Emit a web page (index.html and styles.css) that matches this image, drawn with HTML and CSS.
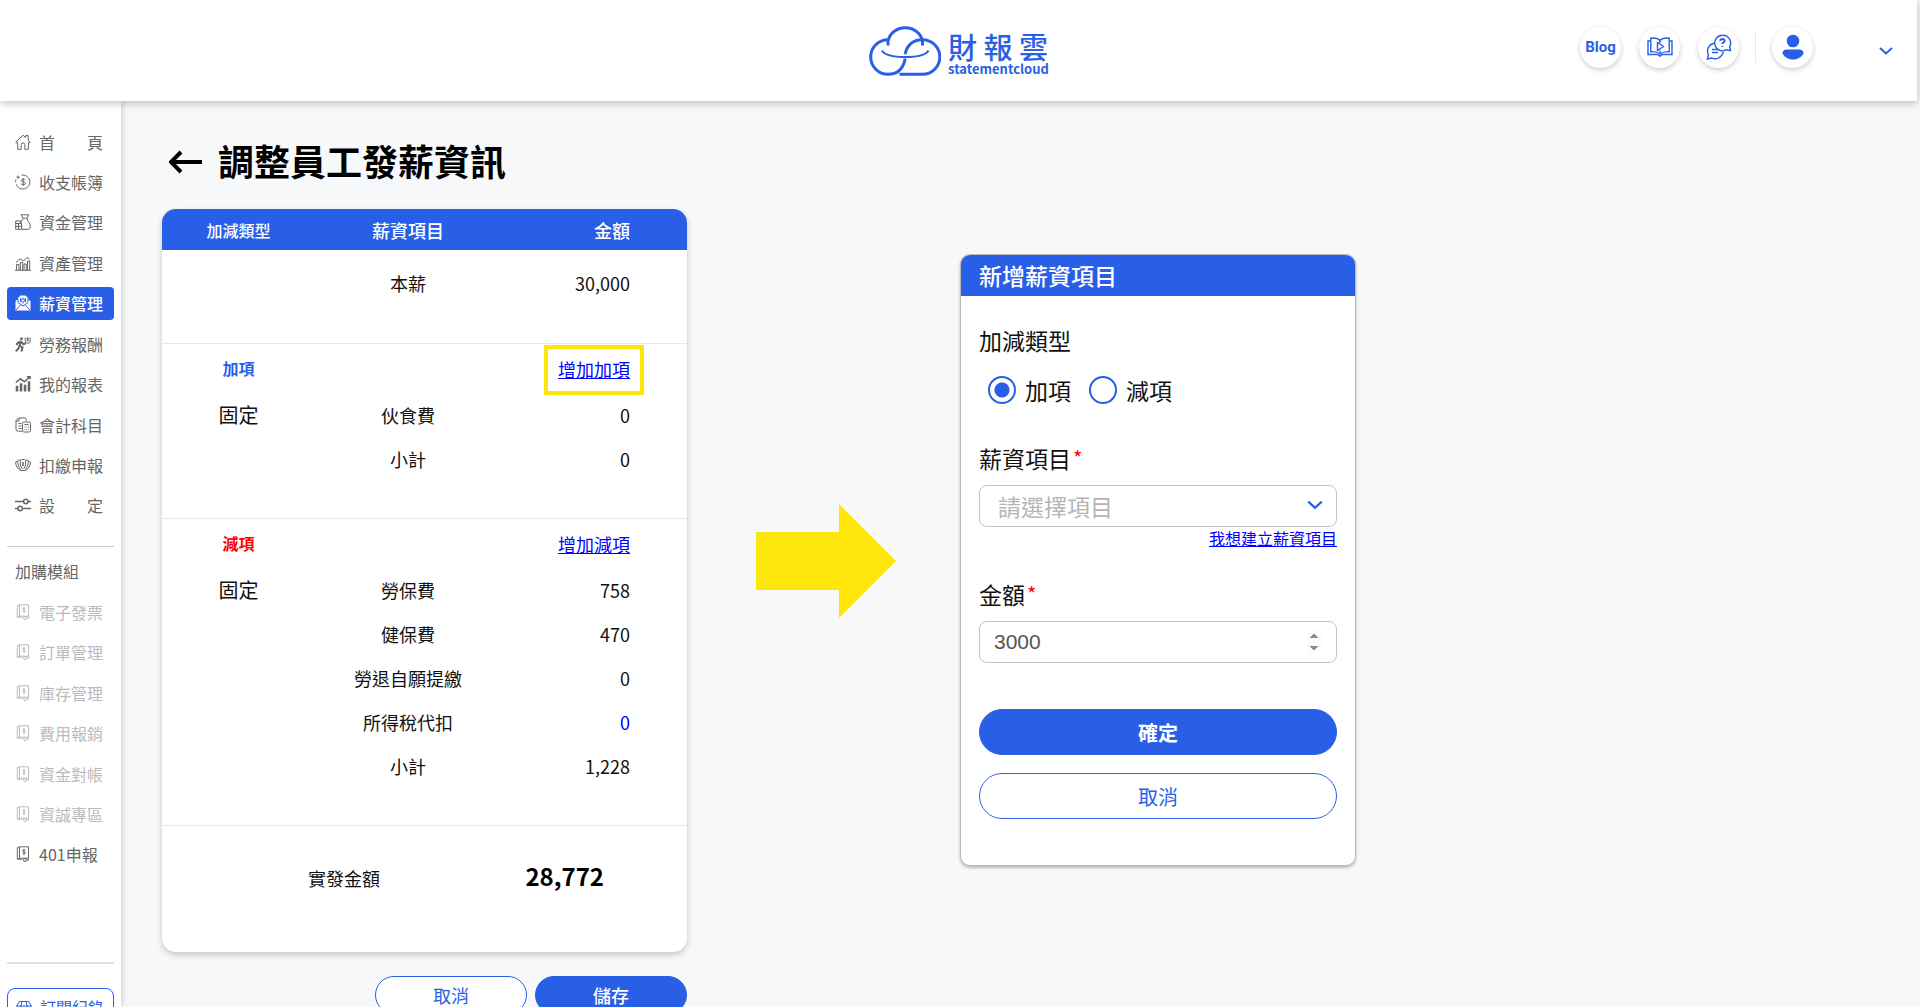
FILE: index.html
```html
<!DOCTYPE html>
<html lang="zh-Hant">
<head>
  <meta charset="UTF-8" />
  <meta name="viewport" content="width=device-width, initial-scale=1" />
  <title>財報雲 - 調整員工發薪資訊</title>
  <link rel="stylesheet" href="styles.css">
</head>
<body>
  <svg class="sprite" aria-hidden="true">
    <symbol id="i-home" viewBox="0 0 16 16"><path d="M.8 8.200 8 1.200l2.600 2.400V1.600h2.600v4.600l2 2-.8.9-1-.8v7H9.800v-4.600a1.800 1.800 0 0 0-3.600 0v4.600H2.700v-7l-1 .8z"/></symbol>
    <symbol id="i-coin" viewBox="0 0 16 16"><path d="M6.500 1.200a7 7 0 1 1-5.300 9M.5 8a7 7 0 0 1 .5-2.500M1.500 3.200h3.200M3.100 1.600v3.200"/><path d="M10.300 6.300C9.800 5 6.300 4.900 6.200 6.600c0 1.900 4.200.8 4.200 2.800 0 1.700-3.700 1.700-4.300.3M8.200 4v8"/></symbol>
    <symbol id="i-bag" viewBox="0 0 16 16"><path d="M6 .8h8l-2 3.400H8zM8 4.200c0 2-2.500 4-2.500 5M12 4.200c0 3 3.500 5 3.300 8.800 0 1.500-1 2.300-2.300 2.300H6.500M.7 7h5v2.500M.7 7v8.300h6V9.500h-6M.7 12.400h6M3.500 9.500v5.800"/></symbol>
    <symbol id="i-asset" viewBox="0 0 16 16"><path d="M0 15.300h16M1.500 15V9.500h2.400V15M5.300 15V7.500h2.400V15M9 15V9h2.200v6M12.500 15V6h2.200v9M1 7.500l4-3.500 3.500 2L12 2.500l2.500 1.500"/></symbol>
    <symbol id="i-salary" viewBox="0 0 16 16"><path class="solid" d="M.5 6 3 4.200V3L5.500.6h5L13 3v1.200L15.500 6v9.500H.5z"/><path class="cut" d="M3 4v3.500L8 11l5-3.500V4M1 15l4.500-5M15 15l-4.500-5M5.500 3v4M10.500 3v4M8 2.500v1M8 7.500v1"/><circle class="cut" cx="8" cy="5.500" r="1.600"/></symbol>
    <symbol id="i-labor" viewBox="0 0 16 16"><circle class="solid" cx="6.500" cy="2.800" r="1.500"/><path class="thick" d="M6 5.500 4.500 9.500l3 2-1 4M4.500 9.500l-1 3-2.800 2.700M6 5.500 2.500 7l-1 2M6 5.500l2.500 2.700 2.300-1"/><path d="M10.200 1.500v3.200a2.500 2.500 0 0 0 5 0V1.500M12.700 1v4.300M11.500 2.800h2.400M11.500 4.300h2.400"/></symbol>
    <symbol id="i-report" viewBox="0 0 16 16"><path class="mid" d="M1.500 15.500V10.500h1v5M5.500 15.500V8h1v7.500M9.500 15.500V9.500h1v6M13.500 15.500V6h1v9.500M.8 6.500l4.700-3.700 4 3L14.500 1M12 .8h3v2.500"/></symbol>
    <symbol id="i-subject" viewBox="0 0 16 16"><path d="M7 14.200H3.200A2 2 0 0 1 1 12V3.500L3.500 1H9.800a1.500 1.500 0 0 1 1.500 1.500V4M1 4h3V1M3.500 6.500h3M3.500 9h3M3.500 11.500h3"/><rect x="7.500" y="5" width="8" height="10" rx="1.500"/><path d="M9.500 7.500h4M9.500 10h.8M11.300 10h.8M13 10h.8M9.500 12.500h.8M11.300 12.500h.8M13 12.500h.8"/></symbol>
    <symbol id="i-tax" viewBox="0 0 16 16"><path d="M5.500 13.500 3.500 12C1.800 10.500.6 7.500.6 5l2-.8.8-1.200 2 .3L6.500 2.500h3l1.100.8 2-.3.800 1.200 2 .8c0 2.500-1.200 5.500-2.900 7l-2 1.500zM2.600 4.200c.2 3 1.100 6 2.900 8.300M5.400 3.300V8l1.800 4M13.400 4.200c-.2 3-1.100 6-2.900 8.300M10.600 3.300V8l-1.800 4M8 5v4M7 6h2M7 8h2"/></symbol>
    <symbol id="i-setting" viewBox="0 0 16 16"><path class="mid" d="M0 4.500h8.500M13 4.500h3M0 11.500h3M7.500 11.500H16"/><circle class="mid" cx="10.800" cy="4.500" r="2.200"/><circle class="mid" cx="5.200" cy="11.500" r="2.200"/></symbol>
    <symbol id="i-module" viewBox="0 0 16 16"><path d="M4.500.8h9v11.400h-9zM4.500.8 2.300 1.500v11.700h5M4.500 12.200l-2.200 1M13.500 12.200v2H12"/><path d="M10.200 4.500c-.5-.8-2.500-.7-2.500.4s2.600.7 2.600 1.900-2.200 1.200-2.700.3M9 3v6"/><circle cx="10" cy="14" r="1.500"/></symbol>
    <symbol id="i-gem" viewBox="0 0 16 16"><path d="M3.500 2.500h9L15.500 7 8 14.500.5 7zM.5 7h15M5 7l3 7L11 7M5 7l1-4.500M11 7l-1-4.500"/></symbol>
    <symbol id="i-chevron" viewBox="0 0 16 10"><path d="M2 2l6 5.500L14 2"/></symbol>
  </svg>

  <header class="topbar">
    <a class="logo" href="#" aria-label="財報雲 statementcloud">
      <svg class="logo-mark" viewBox="0 0 72 51">
        <path d="M19 20.500V17a17.300 15.500 0 0 1 34.500 0v3.500"/>
        <path d="M19 14.700a17.300 17.300 0 1 0 0 34.600c10 0 15.500-6.500 17.200-15.800"/>
        <path d="M30.500 49.300h23a17.300 17.300 0 1 0 0-34.600c-10 0-16 6-17.300 14.500"/>
        <path class="smile" d="M13 25.500c2 3.500 9 6.500 23.300 6.500S57.500 29 59.500 25.500"/>
      </svg>
      <span class="logo-text">
        <span class="logo-name"><span>財</span><span>報</span><span>雲</span></span>
        <span class="logo-sub">statementcloud</span>
      </span>
    </a>
    <nav class="tools" aria-label="工具">
      <a class="round" href="#">Blog</a>
      <a class="round" href="#" aria-label="教學影片">
        <svg width="26" height="20" viewBox="0 0 26 20"><path d="M13 3.500C10.500.8 6.500.8 3.800 1.200v13.500c3.500-.4 6.700.2 9.200 2.300 2.500-2.100 5.700-2.700 9.200-2.300V1.200C19.500.8 15.500.8 13 3.500z"/><path d="M3.800 4H1v13.500h9.500l2.500 1.700 2.500-1.700H25V4h-2.800M13 3.500V6M13 13.500V17M10.500 5.500v8l6-4z"/></svg>
      </a>
      <a class="round" href="#" aria-label="常見問題">
        <svg width="26" height="26" viewBox="0 0 26 26"><path d="M16.500 1.200a7.800 7.800 0 1 0 4 14.500l4 .9-.8-4a7.800 7.800 0 0 0-7.200-11.400z"/><path d="M8.500 9.200a7.800 7.800 0 0 0-6 11.500L1.300 25l4.500-.9c4.800 2 10.200-.8 11.400-6.300M6 15.500h6M6 18.500h6"/><path class="bold" d="M14.300 6.800c.2-2.600 4.500-2.400 4.300 0-.1 1.500-2.100 1.600-2.100 3.200M16.500 12v1"/></svg>
      </a>
      <span class="divider"></span>
      <a class="round user" href="#" aria-label="帳號">
        <svg width="22" height="26" viewBox="0 0 22 26"><circle cx="11" cy="7" r="6.300"/><path d="M.5 19.500c0-2.600 1.800-4 4-4h13c2.200 0 4 1.400 4 4C19.500 23 16 25.500 11 25.500S2.500 23 .5 19.500z"/></svg>
      </a>
      <button class="account" type="button" aria-label="展開選單"><svg width="16" height="10"><use href="#i-chevron"/></svg></button>
    </nav>
  </header>

  <div class="layout">
    <aside class="sidebar">
      <nav class="menu" aria-label="主選單">
        <a href="#"><svg><use href="#i-home"/></svg>首　　頁</a>
        <a href="#"><svg><use href="#i-coin"/></svg>收支帳簿</a>
        <a href="#"><svg><use href="#i-bag"/></svg>資金管理</a>
        <a href="#"><svg><use href="#i-asset"/></svg>資產管理</a>
        <a class="active" href="#"><svg><use href="#i-salary"/></svg>薪資管理</a>
        <a href="#"><svg><use href="#i-labor"/></svg>勞務報酬</a>
        <a href="#"><svg><use href="#i-report"/></svg>我的報表</a>
        <a href="#"><svg><use href="#i-subject"/></svg>會計科目</a>
        <a href="#"><svg><use href="#i-tax"/></svg>扣繳申報</a>
        <a href="#"><svg><use href="#i-setting"/></svg>設　　定</a>
      </nav>
      <nav class="menu modules" aria-label="加購模組">
        <h2>加購模組</h2>
        <a class="off" href="#"><svg><use href="#i-module"/></svg>電子發票</a>
        <a class="off" href="#"><svg><use href="#i-module"/></svg>訂單管理</a>
        <a class="off" href="#"><svg><use href="#i-module"/></svg>庫存管理</a>
        <a class="off" href="#"><svg><use href="#i-module"/></svg>費用報銷</a>
        <a class="off" href="#"><svg><use href="#i-module"/></svg>資金對帳</a>
        <a class="off" href="#"><svg><use href="#i-module"/></svg>資誠專區</a>
        <a href="#"><svg><use href="#i-module"/></svg>401申報</a>
      </nav>
      <div class="orders">
        <a href="#"><svg><use href="#i-gem"/></svg>訂閱紀錄</a>
      </div>
    </aside>

    <main>
      <div class="page-title">
        <a href="#" aria-label="返回"><svg width="34" height="24" viewBox="0 0 34 24"><path d="M33 12H2M12 2 2 12l10 10"/></svg></a>
        <h1>調整員工發薪資訊</h1>
      </div>

      <div class="board">
        <section class="salary">
          <div class="card">
            <table>
              <thead>
                <tr><th class="type">加減類型</th><th class="item">薪資項目</th><th class="amount">金額</th></tr>
              </thead>
              <tbody class="base">
                <tr><td></td><td>本薪</td><td>30,000</td></tr>
              </tbody>
              <tbody>
                <tr class="group"><th class="plus">加項</th><td></td><td><a class="marked" href="#">增加加項</a></td></tr>
                <tr><td>固定</td><td>伙食費</td><td>0</td></tr>
                <tr class="last"><td></td><td>小計</td><td>0</td></tr>
              </tbody>
              <tbody>
                <tr class="group"><th class="minus">減項</th><td></td><td><a href="#">增加減項</a></td></tr>
                <tr><td>固定</td><td>勞保費</td><td>758</td></tr>
                <tr><td></td><td>健保費</td><td>470</td></tr>
                <tr><td></td><td>勞退自願提繳</td><td>0</td></tr>
                <tr><td></td><td>所得稅代扣</td><td class="editable">0</td></tr>
                <tr class="last"><td></td><td>小計</td><td>1,228</td></tr>
              </tbody>
            </table>
            <div class="total">
              <span>實發金額</span>
              <strong>28,772</strong>
            </div>
          </div>
          <div class="actions">
            <button class="btn outline" type="button">取消</button>
            <button class="btn" type="button">儲存</button>
          </div>
        </section>

        <svg class="arrow" width="140" height="114" viewBox="0 0 140 114"><path d="M0 28h83V0l57 57-57 57V86H0z"/></svg>

        <form class="dialog">
          <h2>新增薪資項目</h2>
          <div class="dialog-body">
            <fieldset>
              <legend>加減類型</legend>
              <label><input type="radio" name="kind" checked>加項</label>
              <label><input type="radio" name="kind">減項</label>
            </fieldset>
            <label class="caption" for="item">薪資項目<sup>*</sup></label>
            <div class="select">
              <select id="item"><option>請選擇項目</option></select>
              <svg width="18" height="12"><use href="#i-chevron"/></svg>
            </div>
            <a class="create" href="#">我想建立薪資項目</a>
            <label class="caption" for="amount">金額<sup>*</sup></label>
            <input id="amount" type="number" value="3000">
            <button class="btn" type="button">確定</button>
            <button class="btn outline" type="button">取消</button>
          </div>
        </form>
      </div>
    </main>
  </div>
</body>
</html>
```

FILE: styles.css
```css
* {
  box-sizing: border-box;
}
body {
  margin: 0;
  height: 100vh;
  overflow: hidden;
  display: flex;
  flex-direction: column;
  font-family: "Noto Sans CJK TC", "Noto Sans", sans-serif;
  background: #f7f8fa;
  color: #111;
}
button, select {
  font-family: inherit;
  cursor: pointer;
}
svg {
  fill: none;
  stroke: currentColor;
}
.sprite {
  display: none;
}

/* top bar */
.topbar {
  position: relative;
  z-index: 2;
  flex: none;
  height: 101px;
  margin-right: 3px;
  display: grid;
  grid-template-columns: 1fr auto 1fr;
  align-items: center;
  background: #fff;
  box-shadow: 0 2px 8px rgba(0, 0, 0, 0.25);
}
.logo {
  grid-column: 2;
  display: flex;
  align-items: center;
  gap: 7px;
  color: #285fe6;
  text-decoration: none;
}
.logo-mark {
  width: 72px;
  height: 51px;
  stroke-width: 3;
}
.logo-mark .smile {
  stroke-width: 2;
}
.logo-text {
  display: block;
  width: 100px;
}
.logo-name {
  display: flex;
  justify-content: space-between;
  font-size: 29px;
  font-weight: 500;
  line-height: 32px;
  padding-top: 4px;
}
.logo-sub {
  display: block;
  font-size: 13px;
  font-weight: 700;
  line-height: 14px;
}
.tools {
  justify-self: end;
  display: flex;
  align-items: center;
  gap: 18px;
  padding: 0 17px 7px 0;
  color: #285fe6;
}
.round {
  width: 41px;
  height: 41px;
  display: flex;
  align-items: center;
  justify-content: center;
  border-radius: 50%;
  box-shadow: 0 2px 5px rgba(0, 0, 0, 0.2);
  color: inherit;
  font: 700 15px Roboto, sans-serif;
  text-decoration: none;
}
.round svg {
  stroke-width: 1.4;
}
.round .bold {
  stroke-width: 2;
}
.user svg {
  fill: currentColor;
  stroke: none;
}
.divider {
  width: 1px;
  height: 32px;
  background: #e8e8e8;
  margin: 0 -2px;
}
.account {
  margin: 8px 0 0 41px;
  padding: 0 6px;
  border: 0;
  background: none;
  color: inherit;
  line-height: 0;
}
.account svg {
  stroke-width: 2;
}

/* side menu */
.layout {
  flex: 1;
  display: flex;
  min-height: 0;
}
.sidebar {
  flex: none;
  width: 121px;
  padding: 24px 7px 0;
  background: #fff;
  box-shadow: 1px 0 6px rgba(0, 0, 0, 0.18);
}
.menu {
  display: flex;
  flex-direction: column;
  justify-content: space-between;
  height: 397px;
}
.menu a {
  display: flex;
  align-items: center;
  gap: 8px;
  height: 33px;
  padding-left: 8px;
  border-radius: 4px;
  color: #666;
  font-size: 16px;
  text-decoration: none;
  white-space: nowrap;
}
.sidebar svg {
  flex: none;
  width: 16px;
  height: 16px;
}
.menu a.active {
  background: #285fe6;
  color: #fff;
  font-weight: 500;
}
.menu a.off {
  color: #bbb;
}
.solid {
  fill: currentColor;
  stroke: none;
}
.cut {
  stroke: #285fe6;
}
.mid {
  stroke-width: 1.5px;
}
.thick {
  stroke-width: 2px;
}
.modules {
  height: 325px;
  margin-top: 24px;
  border-top: 1px solid #ccc;
}
.modules h2 {
  margin: 8px 0 0;
  padding-left: 8px;
  color: #666;
  font-size: 16px;
  font-weight: 400;
  line-height: 33px;
}
.orders {
  margin-top: 91px;
  padding-top: 24px;
  border-top: 2px solid #e0e0e0;
}
.orders a {
  display: flex;
  align-items: center;
  gap: 8px;
  height: 38px;
  padding-left: 8px;
  border: 1px solid #285fe6;
  border-radius: 8px;
  color: #285fe6;
  font-size: 16px;
  text-decoration: none;
  white-space: nowrap;
}

/* page */
main {
  flex: 1;
  padding: 34px 40px 0 41px;
}
.page-title {
  display: flex;
  align-items: center;
  gap: 15px;
  padding-left: 7px;
  height: 54px;
  margin-bottom: 20px;
}
.page-title a {
  color: #000;
  line-height: 0;
}
.page-title svg {
  stroke-width: 4;
}
h1 {
  margin: 0;
  padding-bottom: 4px;
  font-size: 36px;
  font-weight: 700;
  line-height: 50px;
  color: #000;
}
.board {
  display: flex;
  align-items: flex-start;
}
.salary {
  flex: none;
  width: 525px;
}
.card {
  border-radius: 14px;
  background: #fff;
  box-shadow: 0 3px 6px rgba(0, 0, 0, 0.2);
  overflow: hidden;
}
table {
  width: 100%;
  table-layout: fixed;
  border-collapse: collapse;
  font-size: 18px;
  line-height: 26px;
}
thead th {
  height: 41px;
  padding: 0;
  background: #285fe6;
  color: #fff;
  font-weight: 500;
}
thead .type {
  width: 153px;
  font-size: 16px;
}
thead .item {
  width: 186px;
}
td, tbody th {
  height: 44px;
  padding: 0;
  text-align: center;
}
tr > :last-child {
  padding-right: 57px;
  text-align: right;
}
tbody td:first-child {
  font-size: 20px;
}
tbody th {
  font-size: 16px;
  font-weight: 700;
}
.group > * {
  height: 50px;
}
.group > :last-child {
  padding-top: 2px;
}
tbody {
  border-bottom: 1px solid #e8e8e8;
}
.base td {
  height: 93px;
  padding-bottom: 26px;
}
.last td {
  height: 81px;
  padding-bottom: 36px;
}
.plus {
  color: #285fe6;
}
.minus {
  color: #f00;
}
.card a, .create {
  color: #00f;
}
.marked {
  position: relative;
}
.marked::after {
  content: "";
  position: absolute;
  inset: -11px -14px -13px;
  border: 4px solid #ffe60a;
}
.editable {
  color: #00f;
}
.total {
  display: flex;
  justify-content: space-between;
  align-items: baseline;
  padding: 32px 83px 56px 146px;
  font-size: 18px;
  line-height: 35px;
}
.total strong {
  font-size: 24px;
  color: #000;
}
.btn {
  height: 46px;
  padding: 0;
  border: 1px solid #285fe6;
  border-radius: 23px;
  background: #285fe6;
  color: #fff;
  font-size: 20px;
  font-weight: 700;
}
.btn.outline {
  background: #fff;
  color: #285fe6;
  font-weight: 400;
}
.actions {
  display: flex;
  justify-content: flex-end;
  gap: 8px;
  margin-top: 24px;
}
.actions .btn {
  width: 152px;
  height: 38px;
  font-size: 18px;
  font-weight: 500;
}
.actions .outline {
  font-weight: 400;
}
.arrow {
  flex: none;
  margin: 295px 65px 0 69px;
  fill: #ffe60a;
  stroke: none;
}

/* add item dialog */
.dialog {
  flex: none;
  width: 396px;
  margin: 45px 0 0 -1px;
  border: 1px solid #bbb;
  border-radius: 10px;
  background: #fff;
  box-shadow: 0 2px 3px rgba(0, 0, 0, 0.25);
  overflow: hidden;
}
.dialog h2 {
  margin: 0;
  padding-left: 18px;
  background: #285fe6;
  color: #fff;
  font-size: 23px;
  font-weight: 500;
  line-height: 41px;
}
.dialog-body {
  display: flex;
  flex-direction: column;
  padding: 27px 18px 46px;
  font-size: 23px;
}
fieldset {
  display: flex;
  gap: 18px;
  margin: 0 0 34px;
  padding: 0 9px;
  border: 0;
}
legend {
  margin: 0 -9px 16px;
  padding: 0;
  line-height: 34px;
}
fieldset label {
  display: flex;
  align-items: center;
  gap: 9px;
  line-height: 34px;
}
input[type="radio"] {
  appearance: none;
  width: 28px;
  height: 28px;
  margin: 0;
  border: 2px solid #285fe6;
  border-radius: 50%;
}
input[type="radio"]:checked {
  background: radial-gradient(circle, #285fe6 7px, #fff 8px);
}
.caption {
  line-height: 34px;
  margin-bottom: 10px;
}
.caption sup {
  margin-left: 2px;
  color: #f00;
  font-size: 20px;
  line-height: 0;
  vertical-align: 2px;
}
.select {
  position: relative;
}
.select select, #amount {
  display: block;
  width: 100%;
  height: 42px;
  border: 1px solid #c4c4c4;
  border-radius: 8px;
  background: #fff;
}
.select select {
  appearance: none;
  padding: 0 18px;
  color: #b5b5b5;
  font-size: 23px;
}
.select svg {
  position: absolute;
  right: 13px;
  top: 14px;
  color: #285fe6;
  stroke-width: 2;
  pointer-events: none;
}
.create {
  align-self: flex-end;
  margin-bottom: 28px;
  font-size: 16px;
  line-height: 22px;
}
#amount {
  margin-bottom: 46px;
  padding: 0 14px;
  color: #555;
  font: 21px "Liberation Sans", sans-serif;
}
#amount::-webkit-inner-spin-button {
  opacity: 1;
}
.dialog .btn + .btn {
  margin-top: 18px;
}
```
